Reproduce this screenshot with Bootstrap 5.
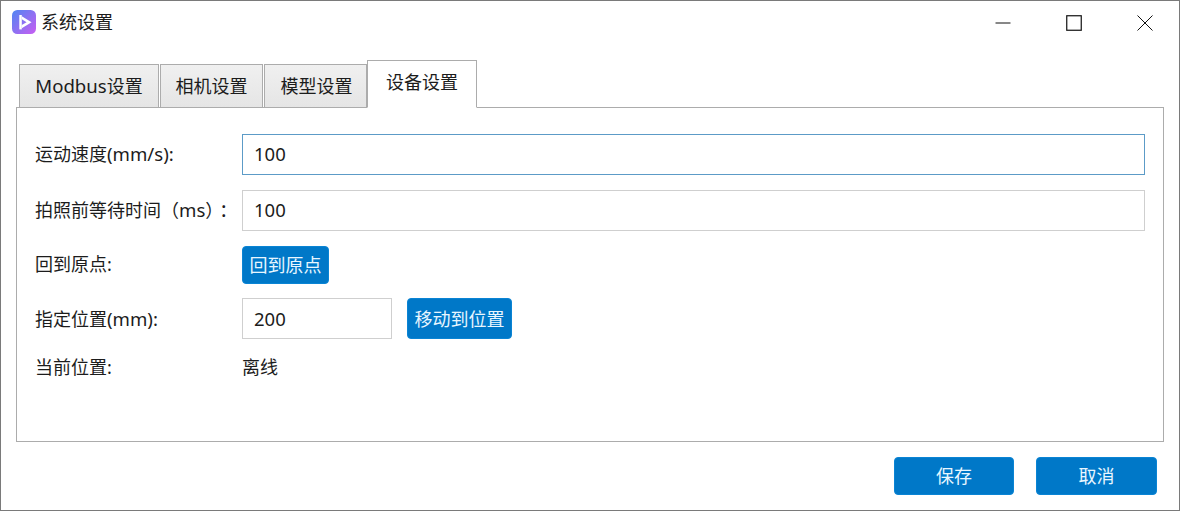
<!DOCTYPE html>
<html lang="zh">
<head>
<meta charset="utf-8">
<title>系统设置</title>
<link href="https://cdn.jsdelivr.net/npm/bootstrap@5.3.0/dist/css/bootstrap.min.css" rel="stylesheet">
<style>
html,body{height:511px;overflow:hidden;background:#fff}
body{font-family:"Noto Sans","Noto Sans CJK SC",sans-serif;font-size:18px;color:#1c1c1c}
.win{width:1180px;height:511px;border:1px solid #7a7a7a;display:flex;flex-direction:column;background:#fff;overflow:hidden}
.win-title{height:43px;padding-left:11px;gap:5px;flex:none}
.win-logo{width:24px;height:24px;flex:none;margin-top:-1px}
.win-name{font-size:18px;line-height:24px;margin-top:-1px}
.win-ctrls{margin-left:auto;margin-right:-1px}
.win-ctrl{width:71px;height:43px;display:flex;align-items:center;justify-content:center}
.tabbar{padding:16px 0 0 18px;height:64px;flex:none;display:flex;align-items:flex-end;margin-bottom:-1px;position:relative;z-index:1}
.tabitem{height:44px;background:linear-gradient(#f0f0f0,#e5e5e5);border:1.5px solid #acacac;border-bottom:1px solid #acacac;display:flex;align-items:center;justify-content:center;font-size:18px;margin-right:1px;color:#1c1c1c}
.tab-a{width:140px}
.tab-b{width:103px}
.tab-c{width:103px;margin-right:0;padding-left:2px}
.tab-d{width:110px;height:48px;background:#fff;border-bottom:1px solid #fff;padding-bottom:3px;margin-right:0}
.pane{margin-left:15px;width:1148px;height:335px;border:1px solid #acacac;flex:none;padding:26px 18px 0 18px;background:#fff}
.lbl{width:207px;flex:none;font-size:18px;line-height:24px;white-space:nowrap;margin:0;text-spacing-trim:space-all;font-feature-settings:"palt" 0,"chws" 0}
.lat{font-size:18.6px}
.paren-tight{letter-spacing:-4px}
.fld{height:41px;border:1.5px solid #cfcfcf;border-radius:0;font-size:18.5px;padding:0 11px 2px;color:#1c1c1c;box-shadow:none}
.fld-on{border-color:#5c9bc7}
.fld-sm{width:150px;flex:none;padding-bottom:0}
.blue-btn{background:#0078c8;border:1px solid #0a84d4;color:#e8f6ff;font-size:18px;border-radius:4px;padding:0;line-height:24px}
.blue-btn:hover{background:#0078c8;color:#e8f6ff;border-color:#0a84d4}
.btn-home{width:87px;height:38px}
.btn-move{width:105px;height:41px;margin-left:15px}
.row-a{height:41px;margin-bottom:15px}
.row-a .lbl{margin-bottom:2px}
.row-b{height:38px;margin-bottom:14px}
.row-b .lbl{margin-bottom:2px}
.row-c{height:41px;margin-bottom:15px}
.row-d{height:24px}
.row-d .lbl{margin-top:2px}
.foot{height:68px;flex:none;padding:15px 22px 0 0;gap:22px}
.btn-foot{width:120px;height:38px}
.btn-foot-wide{width:121px}
</style>
</head>
<body>
<div class="win">
  <div class="win-title d-flex align-items-center">
    <svg class="win-logo" viewBox="0 0 25 25">
      <defs><linearGradient id="lg" x1="0" y1="0" x2="1" y2="1"><stop offset="0" stop-color="#4f86f2"/><stop offset="1" stop-color="#c95df2"/></linearGradient></defs>
      <rect x="0" y="0" width="25" height="25" rx="5.5" fill="url(#lg)"/>
      <path d="M7.6 5.2h2.6v15H7.6z" fill="#fff"/>
      <path d="M10.2 6.4 L20.4 12.7 L10.2 19 L10.2 15.7 L15.2 12.7 L10.2 9.7z" fill="#fff"/>
    </svg>
    <span class="win-name">系统设置</span>
    <div class="win-ctrls d-flex">
      <div class="win-ctrl"><svg width="16" height="16" viewBox="0 0 16 16"><path d="M0.5 8h15" stroke="#111" stroke-width="1" fill="none"/></svg></div>
      <div class="win-ctrl"><svg width="16" height="16" viewBox="0 0 16 16"><rect x="0.75" y="0.75" width="14.5" height="14.5" stroke="#111" stroke-width="1.2" fill="none"/></svg></div>
      <div class="win-ctrl"><svg width="16" height="16" viewBox="0 0 16 16"><path d="M0.5 0.5l15 15M15.5 0.5l-15 15" stroke="#111" stroke-width="1" fill="none"/></svg></div>
    </div>
  </div>
  <div class="tabbar">
    <div class="tabitem tab-a"><span><span class="lat">Modbus</span>设置</span></div>
    <div class="tabitem tab-b">相机设置</div>
    <div class="tabitem tab-c">模型设置</div>
    <div class="tabitem tab-d">设备设置</div>
  </div>
  <div class="pane">
    <div class="d-flex align-items-center row-a">
      <label class="lbl">运动速度<span class="lat">(mm/s):</span></label>
      <input class="form-control fld fld-on" value="100">
    </div>
    <div class="d-flex align-items-center row-a">
      <label class="lbl">拍照前等待时间（<span class="lat">ms</span><span class="paren-tight">）</span>：</label>
      <input class="form-control fld" value="100">
    </div>
    <div class="d-flex align-items-center row-b">
      <label class="lbl">回到原点:</label>
      <button class="btn blue-btn btn-home">回到原点</button>
    </div>
    <div class="d-flex align-items-center row-c">
      <label class="lbl">指定位置<span class="lat">(mm):</span></label>
      <input class="form-control fld fld-sm" value="200">
      <button class="btn blue-btn btn-move">移动到位置</button>
    </div>
    <div class="d-flex align-items-center row-d">
      <label class="lbl">当前位置:</label>
      <span class="lbl">离线</span>
    </div>
  </div>
  <div class="foot d-flex justify-content-end">
    <button class="btn blue-btn btn-foot">保存</button>
    <button class="btn blue-btn btn-foot btn-foot-wide">取消</button>
  </div>
</div>
<script src="https://cdn.jsdelivr.net/npm/bootstrap@5.3.0/dist/js/bootstrap.bundle.min.js"></script>
</body>
</html>
